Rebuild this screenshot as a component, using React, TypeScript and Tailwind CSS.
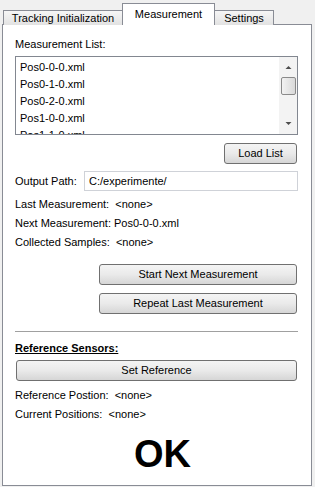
import React from 'react';

const files = ['Pos0-0-0.xml', 'Pos0-1-0.xml', 'Pos0-2-0.xml', 'Pos1-0-0.xml', 'Pos1-1-0.xml'];

function Btn({ label, className }: { label: string; className: string }) {
  return (
    <div
      className={`flex items-center justify-center rounded-[3px] border border-[#707070] bg-gradient-to-b from-[#f4f4f4] via-[#eaeaea] to-[#d6d6d6] text-[11px] text-black ${className}`}
    >
      {label}
    </div>
  );
}

function Tab({ label, active, className }: { label: string; active?: boolean; className: string }) {
  if (active) {
    return (
      <div className={`relative z-10 flex h-[22px] items-start justify-center border border-b-0 border-[#898c95] bg-white pt-[2px] ${className}`}>
        {label}
      </div>
    );
  }
  return (
    <div className={`flex h-[15px] items-center justify-center border border-b-0 border-[#898c95] bg-gradient-to-b from-[#f6f6f6] to-[#e2e2e2] pt-[1px] ${className}`}>
      {label}
    </div>
  );
}

export default function App() {
  return (
    <div
      className="h-[487px] w-[315px] overflow-hidden bg-[#f0f0f0] text-[11px] text-black"
      style={{ fontFamily: '"Liberation Sans", Arial, sans-serif' }}
    >
      <div className="flex items-end pl-[3px] pt-[3px]">
        <Tab label="Tracking Initialization" className="w-[120px] -mr-px" />
        <Tab label="Measurement" active className="w-[93px]" />
        <Tab label="Settings" className="w-[60px] -ml-px" />
      </div>
      <div className="-mt-px ml-[2px] flex h-[462px] w-[310px] flex-col border border-[#898c95] bg-white pl-[12px] pr-[13px]">
        <div className="mt-[11px] leading-[17px]">Measurement List:</div>
        <div className="mt-[3px] flex h-[79px] border border-[#828790]">
          <div className="flex-1 overflow-hidden pl-[4px] pt-[2px]">
            {files.map((f) => (
              <div key={f} className="h-[17px] leading-[17px]">
                {f}
              </div>
            ))}
          </div>
          <div className="flex w-[18px] flex-col items-center bg-[#f3f3f3]">
            <svg width="9" height="18" viewBox="0 0 9 18" className="mt-[1px]">
              <path d="M1.5 11 L4.5 8 L7.5 11 Z" fill="#4d4d4d" />
            </svg>
            <div className="mt-[1px] h-[18px] w-[15px] rounded-[2px] border border-[#8a8a8a] bg-gradient-to-r from-[#f2f2f2] to-[#d9d9d9]" />
            <div className="flex-1" />
            <svg width="9" height="18" viewBox="0 0 9 18" className="mb-[1px]">
              <path d="M1.5 7 L4.5 10 L7.5 7 Z" fill="#4d4d4d" />
            </svg>
          </div>
        </div>
        <div className="mt-[8px] flex justify-end pr-[1px]">
          <Btn label="Load List" className="h-[21px] w-[73px]" />
        </div>
        <div className="mt-[7px] flex items-center">
          <span className="w-[69px]">Output Path:</span>
          <div className="flex h-[20px] flex-1 items-center border border-[#cfd2d8] pl-[4px]">C:/experimente/</div>
        </div>
        <div className="mt-[4px] leading-[19px]">Last Measurement:&nbsp; &lt;none&gt;</div>
        <div className="leading-[19px]">Next Measurement: Pos0-0-0.xml</div>
        <div className="leading-[19px]">Collected Samples:&nbsp; &lt;none&gt;</div>
        <div className="mt-[12px] flex flex-col items-end gap-[8px] pr-[1px]">
          <Btn label="Start Next Measurement" className="h-[21px] w-[198px]" />
          <Btn label="Repeat Last Measurement" className="h-[21px] w-[198px]" />
        </div>
        <div className="mt-[17px] h-px bg-[#a0a0a0]" />
        <div className="mt-[7px] font-bold underline leading-[19px]">Reference Sensors:</div>
        <div className="mt-[2px] pl-[1px] pr-[1px]">
          <Btn label="Set Reference" className="h-[21px] w-full" />
        </div>
        <div className="mt-[5px] leading-[19px]">Reference Postion:&nbsp; &lt;none&gt;</div>
        <div className="leading-[19px]">Current Positions:&nbsp; &lt;none&gt;</div>
        <div className="ml-[12px] mt-[8px] text-center text-[38px] font-bold leading-[44px]">OK</div>
      </div>
    </div>
  );
}
